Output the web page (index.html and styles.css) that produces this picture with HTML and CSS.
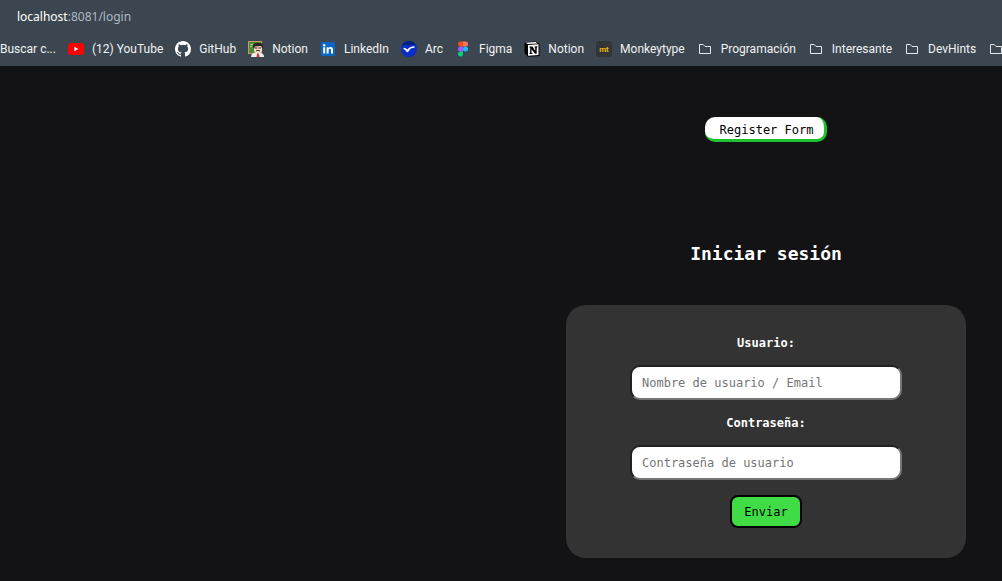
FILE: index.html
```html
<!DOCTYPE html>
<html lang="es">
<head>
<meta charset="utf-8">
<meta name="viewport" content="width=device-width, initial-scale=1">
<title>Iniciar sesión</title>
<link rel="stylesheet" href="styles.css">
</head>
<body>
<header class="browser">
  <div class="address"><span class="host">localhost</span>:8081/login</div>
  <nav class="bookmarks" aria-label="Marcadores">
    <a class="bookmark" href="#">Buscar c...</a>
    <a class="bookmark" href="#">
      <svg class="icon" viewBox="0 0 16 16"><rect y="2" width="16" height="12" rx="3" fill="#f00"/><path d="M6.4 5.8v4.4L10.3 8z" fill="#fff"/></svg>
      (12) YouTube</a>
    <a class="bookmark" href="#">
      <svg class="icon" viewBox="0 0 16 16"><path fill="#fff" d="M8 0C3.58 0 0 3.58 0 8c0 3.54 2.29 6.53 5.47 7.59.4.07.55-.17.55-.38 0-.19-.01-.82-.01-1.49-2.01.37-2.53-.49-2.69-.94-.09-.23-.48-.94-.82-1.13-.28-.15-.68-.52-.01-.53.63-.01 1.08.58 1.23.82.72 1.21 1.87.87 2.33.66.07-.52.28-.87.51-1.07-1.78-.2-3.64-.89-3.64-3.95 0-.87.31-1.59.82-2.15-.08-.2-.36-1.02.08-2.12 0 0 .67-.21 2.2.82a7.6 7.6 0 0 1 4 0c1.53-1.04 2.2-.82 2.2-.82.44 1.1.16 1.92.08 2.12.51.56.82 1.27.82 2.15 0 3.07-1.87 3.75-3.65 3.95.29.25.54.73.54 1.48 0 1.07-.01 1.93-.01 2.2 0 .21.15.46.55.38A8 8 0 0 0 16 8c0-4.42-3.58-8-8-8z"/></svg>
      GitHub</a>
    <a class="bookmark" href="#">
      <svg class="icon" viewBox="0 0 16 16"><path fill="#c79a60" d="M0 0h14v13H0z"/><path fill="#4f8a3c" d="M1 1h12v11H1z"/><path d="M2 4l3-1M2 6l2-1" stroke="#a9cf91"/><path fill="#eee" d="M3 16c0-3 2-4 4-4.500h4c3 .5 5 1.500 5 4.500z"/><path fill="#f7dcc2" d="M6 4h8v5c0 2-2 3.500-4 3.500S6 11 6 9z"/><path fill="#2c2522" d="M5 6c0-4 3-5 6-4 3-.5 4 1 4 4l-1 1-1-2-6 .5L6 8z"/><path d="M7 7h2.500M10.500 7H13M8 10q2-1.500 4 0" stroke="#2c2522" fill="none"/><path fill="#d92e36" d="M9.200 12.500h1.700l.6 3.500h-3z"/></svg>
      Notion</a>
    <a class="bookmark" href="#">
      <svg class="icon" viewBox="0 0 16 16"><rect x="1" y="1" width="14" height="14" rx="1" fill="#0a66c2"/><path d="M3.200 6.200h2v6.300h-2zM6.600 6.200h1.900v.9c.4-.7 1.100-1.100 2-1.100 2 0 2.500 1.300 2.500 3.100v3.400h-2V9.500c0-1-.1-1.800-1.100-1.800S8.600 8.500 8.600 9.500v3h-2z" fill="#fff"/><circle cx="4.200" cy="4.200" r="1.200" fill="#fff"/></svg>
      LinkedIn</a>
    <a class="bookmark" href="#">
      <svg class="icon" viewBox="0 0 16 16"><circle cx="8" cy="8" r="8" fill="#0b2fc4"/><path d="M1 4a8 8 0 0 1 14 0z" fill="#061f83"/><path d="M2.500 7.500c1.500 0 2.500.6 4 2.200C8 7.500 10 6 13.500 6" stroke="#fff" stroke-width="1.600" fill="none"/><path d="M4.500 9.500l2 1.200L8.500 9" stroke="#fff" fill="none"/></svg>
      Arc</a>
    <a class="bookmark" href="#">
      <svg class="icon" viewBox="0 0 16 16"><path d="M8 .5H5.500a2.500 2.500 0 0 0 0 5H8z" fill="#f24e1e"/><path d="M8 .5h2.500a2.500 2.500 0 0 1 0 5H8z" fill="#ff7262"/><path d="M8 5.500H5.500a2.500 2.500 0 0 0 0 5H8z" fill="#a259ff"/><circle cx="10.500" cy="8" r="2.500" fill="#1abcfe"/><path d="M8 10.500H5.500A2.500 2.500 0 1 0 8 13z" fill="#0acf83"/></svg>
      Figma</a>
    <a class="bookmark" href="#">
      <svg class="icon" viewBox="0 0 16 16"><path d="M.5 1.500L12 .5l3.500 2.500v12L4 15.700.5 12z" fill="#000"/><path d="M1.500 1.800L11.500 1l2 1.400L4 3z" fill="#fff"/><path d="M4 4l10.500-.7V14L4 14.700z" fill="#fff"/><path d="M5.500 5.500h3l2.700 4.300V6.500l-.8-.2v-.9l3-.1v1l-.7.2v6.300h-1.700L7.500 8.200v3.600l.9.200v.9l-2.900.1v-.9l.7-.3V6.600l-.7-.2z" fill="#000"/></svg>
      Notion</a>
    <a class="bookmark" href="#">
      <svg class="icon" viewBox="0 0 16 16"><rect width="16" height="16" rx="3" fill="#323437"/><text class="badge" x="8" y="11" text-anchor="middle">mt</text></svg>
      Monkeytype</a>
    <a class="bookmark" href="#">
      <svg class="icon" viewBox="0 0 16 16"><path class="folder" d="M2.500 12.500v-9h3.700l1.800 2h5.500v7z"/></svg>
      Programación</a>
    <a class="bookmark" href="#">
      <svg class="icon" viewBox="0 0 16 16"><path class="folder" d="M2.500 12.500v-9h3.700l1.800 2h5.500v7z"/></svg>
      Interesante</a>
    <a class="bookmark" href="#">
      <svg class="icon" viewBox="0 0 16 16"><path class="folder" d="M2.500 12.500v-9h3.700l1.800 2h5.500v7z"/></svg>
      DevHints</a>
    <a class="bookmark" href="#" aria-label="Carpeta">
      <svg class="icon" viewBox="0 0 16 16"><path class="folder" d="M2.500 12.500v-9h3.700l1.800 2h5.500v7z"/></svg></a>
  </nav>
</header>
<main class="page">
  <section class="panel">
    <button class="register" type="button">Register Form</button>
    <h1 class="title">Iniciar sesión</h1>
    <form class="card">
      <label class="label" for="user">Usuario:</label>
      <input class="field" id="user" type="text" placeholder="Nombre de usuario / Email">
      <label class="label" for="password">Contraseña:</label>
      <input class="field" id="password" type="password" placeholder="Contraseña de usuario">
      <button class="submit" type="submit">Enviar</button>
    </form>
  </section>
</main>
</body>
</html>
```
FILE: styles.css
```css
* {
  box-sizing: border-box;
}

body {
  margin: 0;
  min-height: 100vh;
  background: #131315;
  color: #fff;
  font: 12px/16px "DejaVu Sans Mono", monospace;
}

.browser {
  padding: 8px 0;
  overflow: hidden;
  background: #3b4650;
  color: #f0f2f4;
  font: 12px/18px "Noto Sans", sans-serif;
}

.address {
  padding-left: 17px;
  color: #acb7c1;
}

.host {
  color: #fff;
}

.bookmarks {
  display: flex;
  align-items: center;
  gap: 12px;
  padding-top: 14px;
  font-family: Roboto, sans-serif;
}

.bookmark {
  display: flex;
  flex: none;
  align-items: center;
  gap: 8px;
  color: inherit;
  text-decoration: none;
  white-space: nowrap;
}

.icon {
  flex: none;
  width: 16px;
  height: 16px;
}

.folder {
  fill: none;
  stroke: #e4e7e9;
  stroke-linejoin: round;
}

.badge {
  fill: #e2b714;
  font: bold 8px "Roboto", sans-serif;
}

.page {
  display: flex;
  justify-content: flex-end;
  padding: 51px 36px 23px;
}

.panel {
  display: flex;
  flex-direction: column;
  align-items: center;
  width: 100%;
  max-width: 400px;
}

.register {
  padding: 6px 11px 1px 15px;
  border: 0 solid #1fc12f;
  border-width: 0 3px 3px 0;
  border-radius: 10px;
  background: #fff;
  color: #000;
  font: inherit;
  line-height: 15px;
}

.title {
  margin: 100px 0 39px;
  font-size: 18px;
  line-height: 24px;
}

.card {
  display: flex;
  flex-direction: column;
  align-items: center;
  width: 100%;
  padding: 30px;
  border-radius: 20px;
  background: #333;
}

.label {
  margin-bottom: 14px;
  font-weight: bold;
}

.field {
  width: 100%;
  max-width: 272px;
  height: 35px;
  margin-bottom: 15px;
  padding: 0 10px;
  border: 2px solid;
  border-color: #212121 #767676 #767676 #212121;
  border-radius: 10px;
  background: #fff;
  color: #000;
  font: inherit;
}

.field::placeholder {
  color: #757575;
}

.submit {
  padding: 7px 12px 6px;
  border: 2px solid #000;
  border-radius: 8px;
  background: #40dc46;
  color: #000;
  font: inherit;
}
```
